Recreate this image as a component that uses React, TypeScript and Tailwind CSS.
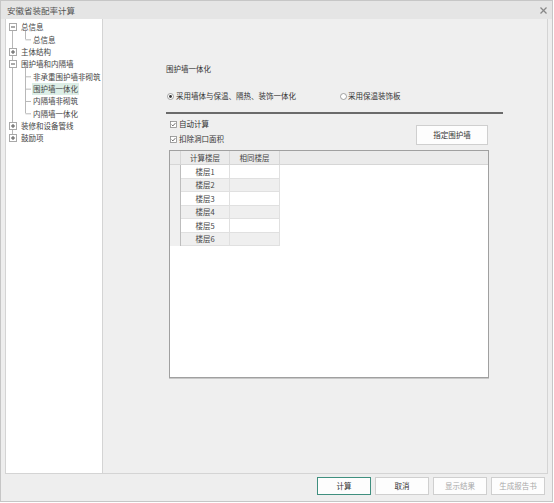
import React from "react";

const ROW = 12.33;

function Expander({ open }: { open: boolean }) {
  return (
    <svg width="8" height="8" viewBox="0 0 8 8" className="shrink-0">
      <rect x="0.5" y="0.5" width="7" height="7" fill="#fff" stroke="#a9a9a9" />
      <line x1="2" y1="4" x2="6" y2="4" stroke="#555" />
      {!open && <line x1="4" y1="2" x2="4" y2="6" stroke="#555" />}
    </svg>
  );
}

type Node = { label: string; level: 0 | 1; open?: boolean; selected?: boolean };

const nodes: Node[] = [
  { label: "总信息", level: 0, open: true },
  { label: "总信息", level: 1 },
  { label: "主体结构", level: 0, open: false },
  { label: "围护墙和内隔墙", level: 0, open: true },
  { label: "非承重围护墙非砌筑", level: 1 },
  { label: "围护墙一体化", level: 1, selected: true },
  { label: "内隔墙非砌筑", level: 1 },
  { label: "内隔墙一体化", level: 1 },
  { label: "装修和设备管线", level: 0, open: false },
  { label: "鼓励项", level: 0, open: false },
];

function TreeLines() {
  const cy = (i: number) => 8 + ROW * i;
  const c = "#b8b8b8";
  return (
    <svg className="absolute left-0 top-0 pointer-events-none" width="97" height="160">
      <line x1="6.5" y1={cy(0)} x2="6.5" y2={cy(9)} stroke={c} />
      <line x1="19.5" y1={cy(0) + 4} x2="19.5" y2={cy(1)} stroke={c} />
      <line x1="19.5" y1={cy(1) + 0.5} x2="25" y2={cy(1) + 0.5} stroke={c} />
      <line x1="19.5" y1={cy(3) + 4} x2="19.5" y2={cy(7)} stroke={c} />
      {[4, 5, 6, 7].map((i) => (
        <line key={i} x1="19.5" y1={cy(i) + 0.5} x2="25" y2={cy(i) + 0.5} stroke={c} />
      ))}
    </svg>
  );
}

function Tree() {
  return (
    <div className="relative w-[97px] bg-white border-r border-[#d4d4d4] shrink-0">
      <TreeLines />
      <div className="relative flex flex-col pt-[2px]">
        {nodes.map((n, i) => (
          <div key={i} className="flex items-center h-[12.33px] text-[7.5px] leading-none text-[#444] whitespace-nowrap">
            {n.level === 0 ? (
              <>
                <div className="w-[3px]" />
                <Expander open={!!n.open} />
                <div className="w-[4px]" />
                <span>{n.label}</span>
              </>
            ) : (
              <>
                <div className="w-[26px]" />
                <span className={n.selected ? "bg-[#dceee6] px-[1px] py-[2px]" : "px-[1px]"}>{n.label}</span>
              </>
            )}
          </div>
        ))}
      </div>
    </div>
  );
}

function Radio({ checked }: { checked: boolean }) {
  return (
    <svg width="7" height="7" viewBox="0 0 7 7" className="shrink-0">
      <circle cx="3.5" cy="3.5" r="3" fill="#fff" stroke="#8c8c8c" strokeWidth="0.8" />
      {checked && <circle cx="3.5" cy="3.5" r="1.4" fill="#333" />}
    </svg>
  );
}

function Check() {
  return (
    <svg width="7" height="7" viewBox="0 0 7 7" className="shrink-0">
      <rect x="0.5" y="0.5" width="6" height="6" fill="#fff" stroke="#8c8c8c" strokeWidth="0.8" />
      <polyline points="1.6,3.6 2.9,4.9 5.4,2.1" fill="none" stroke="#444" strokeWidth="0.8" />
    </svg>
  );
}

function Grid() {
  const rows = ["楼层1", "楼层2", "楼层3", "楼层4", "楼层5", "楼层6"];
  return (
    <div className="ml-[3px] mt-[5px] w-[320px] h-[228px] bg-white border border-[#a0a0a0] shadow-[0_1px_0_#c8c8c8]">
      <div className="flex h-[14px] bg-[#ebebeb] border-b border-[#d6d6d6] text-[7.5px] text-[#444]">
        <div className="w-[11px] border-r border-[#d6d6d6]" />
        <div className="w-[49px] border-r border-[#d6d6d6] flex items-center justify-center">计算楼层</div>
        <div className="w-[50px] border-r border-[#d6d6d6] flex items-center justify-center">相同楼层</div>
        <div className="flex-1" />
      </div>
      <div className="flex flex-col">
        {rows.map((r, i) => (
          <div key={r} className="flex h-[13.5px] text-[7.5px] text-[#444]">
            <div className="w-[11px] bg-[#f0f0f0] border-r border-[#bdbdbd]" />
            <div className={`w-[49px] border-r border-b border-[#e0e0e0] flex items-center justify-center ${i % 2 === 1 ? "bg-[#efefef]" : "bg-white"}`}>{r}</div>
            <div className={`w-[50px] border-r border-b border-[#e0e0e0] ${i % 2 === 1 ? "bg-[#efefef]" : "bg-white"}`} />
          </div>
        ))}
      </div>
    </div>
  );
}

function Btn({ children, primary, disabled }: { children: React.ReactNode; primary?: boolean; disabled?: boolean }) {
  return (
    <div
      className={`w-[54px] h-[18px] flex items-center justify-center text-[7.5px] bg-[#fdfdfd] ${
        primary ? "border-[1.5px] border-[#3f8f7f] text-[#333]" : "border border-[#cfcfcf]"
      } ${disabled ? "text-[#a8a8a8]" : "text-[#333]"}`}
    >
      {children}
    </div>
  );
}

export default function App() {
  return (
    <div className="w-[554px] h-[503px] bg-white font-['Noto_Sans_CJK_SC',sans-serif] leading-none">
      <div className="w-[553px] h-[502px] bg-[#eeeeee] border border-[#c6c6c6] flex flex-col">
        <div className="h-[18px] bg-[#e5e5e5] flex items-center justify-between pl-[6px] pr-[5px] shrink-0">
          <span className="text-[8.5px] text-[#555]">安徽省装配率计算</span>
          <svg width="7" height="7" viewBox="0 0 7 7">
            <line x1="0.5" y1="0.5" x2="6.5" y2="6.5" stroke="#888" strokeWidth="1.2" />
            <line x1="6.5" y1="0.5" x2="0.5" y2="6.5" stroke="#888" strokeWidth="1.2" />
          </svg>
        </div>
        <div className="mx-[4px] h-[455px] flex border-x border-b border-[#d4d4d4] shrink-0">
          <Tree />
          <div className="flex-1 bg-[#efefef] pl-[63px]">
            <div className="pt-[45px] text-[7.5px] text-[#333] h-[10px] box-content flex items-center">围护墙一体化</div>
            <div className="mt-[17px] h-[10px] flex items-center text-[7.5px] text-[#333]">
              <div className="w-[174px] flex items-center gap-[2px] pl-[1px]">
                <Radio checked />
                <span>采用墙体与保温、隔热、装饰一体化</span>
              </div>
              <div className="flex items-center gap-[1px]">
                <Radio checked={false} />
                <span>采用保温装饰板</span>
              </div>
            </div>
            <div className="mt-[11px] w-[337px] h-[2px] bg-[#6a6a6a]" />
            <div className="w-[322px] pt-[5px] flex justify-between">
              <div className="flex flex-col gap-[5px] pl-[4px]">
                <div className="h-[10px] flex items-center gap-[2px] text-[7.5px] text-[#333]">
                  <Check />
                  <span>自动计算</span>
                </div>
                <div className="h-[10px] flex items-center gap-[2px] text-[7.5px] text-[#333]">
                  <Check />
                  <span>扣除洞口面积</span>
                </div>
              </div>
              <div className="mt-[6px] w-[72px] h-[20px] bg-[#fdfdfd] border border-[#cfcfcf] flex items-center justify-center text-[7.5px] text-[#333]">
                指定围护墙
              </div>
            </div>
            <Grid />
          </div>
        </div>
        <div className="flex-1 flex justify-end items-start gap-[4px] pt-[3px] pr-[7px]">
          <Btn primary>计算</Btn>
          <Btn>取消</Btn>
          <Btn disabled>显示结果</Btn>
          <Btn disabled>生成报告书</Btn>
        </div>
      </div>
    </div>
  );
}
